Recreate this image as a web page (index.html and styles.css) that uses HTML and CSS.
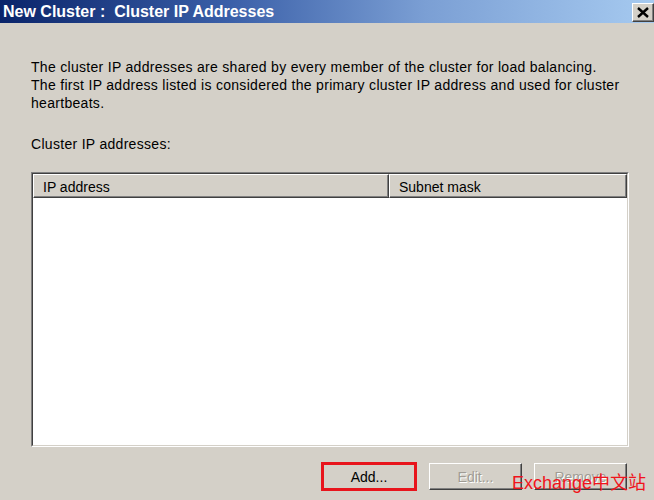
FILE: index.html
```html
<!DOCTYPE html>
<html lang="en">
<head>
  <meta charset="UTF-8">
  <title>New Cluster : Cluster IP Addresses</title>
  <link rel="stylesheet" href="styles.css">
</head>
<body>
  <div class="dialog">
    <div class="titlebar">
      <span class="title">New Cluster :&nbsp; Cluster IP Addresses</span>
      <button class="close" aria-label="Close">
        <svg width="12" height="11" viewBox="0 0 12 11">
          <path d="M1 1 L11 10 M11 1 L1 10" stroke="#000" stroke-width="2.4" fill="none"/>
        </svg>
      </button>
    </div>

    <div class="content">
      <p class="intro">
        The cluster IP addresses are shared by every member of the cluster for load balancing.<br>
        The first IP address listed is considered the primary cluster IP address and used for cluster heartbeats.
      </p>
      <p class="label">Cluster IP addresses:</p>

      <div class="list">
        <div class="list-header">
          <div class="col col-ip">IP address</div>
          <div class="col col-mask">Subnet mask</div>
        </div>
        <div class="list-body"></div>
      </div>

      <div class="actions">
        <button class="btn btn-marked">Add...</button>
        <button class="btn" disabled>Edit...</button>
        <button class="btn" disabled>Remove</button>
      </div>
    </div>

    <!-- watermark on the screenshot -->
    <div class="watermark">Exchange中文站</div>
  </div>
</body>
</html>
```

FILE: styles.css
```css
body {
  margin: 0;
  background-color: #d4d0c8;
  font-family: "Liberation Sans", Arial, sans-serif;
  font-size: 14px;
  color: #000;
}
.dialog {
  position: relative;
  width: 654px;
  height: 500px;
  overflow: hidden;
  background-color: #d4d0c8;
}
.titlebar {
  height: 23px;
  display: flex;
  align-items: center;
  justify-content: space-between;
  background: linear-gradient(to right, #0a246a 0%, #3a5fa8 35%, #7b9fd4 65%, #a6caf0 100%);
}
.title {
  padding-left: 3px;
  color: #fff;
  font-weight: bold;
  font-size: 16px;
  white-space: nowrap;
}
.close {
  width: 22px;
  height: 19px;
  margin-top: 1px;
  padding: 0;
  display: flex;
  align-items: center;
  justify-content: center;
  background-color: #d4d0c8;
  border: 1px solid;
  border-color: #fff #404040 #404040 #fff;
  box-shadow: inset -1px -1px 0 #808080;
}
.content {
  padding: 0 25px 0 31px;
}
.intro {
  margin: 35px 0 0;
  line-height: 18px;
  width: 598px;
  letter-spacing: 0.3px;
}
.label {
  margin: 23px 0 0;
  line-height: 18px;
  letter-spacing: 0.3px;
}
.list {
  margin-top: 19px;
  width: 598px;
  height: 275px;
  box-sizing: border-box;
  border: 1px solid;
  border-color: #808080 #fff #fff #808080;
  display: flex;
  flex-direction: column;
}
.list-header {
  display: flex;
  border-top: 1px solid #404040;
  border-left: 1px solid #404040;
  border-right: 1px solid #d4d0c8;
}
.col {
  height: 24px;
  line-height: 24px;
  box-sizing: border-box;
  padding-left: 9px;
  background-color: #d4d0c8;
  border: 1px solid;
  border-color: #fff #404040 #404040 #fff;
  box-shadow: inset -1px -1px 0 #808080;
}
.col-ip {
  width: 356px;
}
.col-mask {
  flex: 1;
}
.list-body {
  flex: 1;
  background-color: #fff;
  border-left: 1px solid #404040;
  border-right: 1px solid #d4d0c8;
  border-bottom: 1px solid #d4d0c8;
}
.actions {
  display: flex;
  justify-content: flex-end;
  gap: 12px;
  margin-top: 16px;
  padding-right: 2px;
}
.btn {
  width: 93px;
  height: 27px;
  padding: 0;
  font-family: "Liberation Sans", Arial, sans-serif;
  font-size: 14px;
  color: #000;
  background-color: #d4d0c8;
  border: 1px solid;
  border-color: #fff #404040 #404040 #fff;
  box-shadow: inset -1px -1px 0 #808080;
}
.btn:disabled {
  color: #a09c94;
  text-shadow: 1px 1px 0 #fff;
}
.btn-marked {
  width: 94px;
  margin-right: 1px;
  outline: 3px solid #e8141c;
  outline-offset: -2px;
}
.watermark {
  position: absolute;
  left: 512px;
  top: 472px;
  color: #f0141c;
  font-family: "Liberation Sans", "Noto Sans CJK SC", sans-serif;
  font-size: 18px;
  line-height: 22px;
  white-space: nowrap;
}
```
